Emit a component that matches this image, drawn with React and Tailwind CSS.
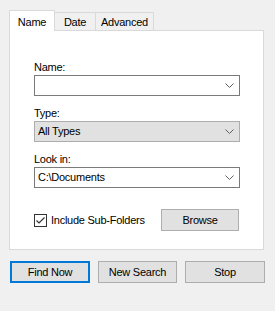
import React from "react";

function Chevron() {
  return (
    <svg width="9" height="5" viewBox="0 0 9 5" className="shrink-0">
      <polyline points="0.5,0.5 4.5,4.5 8.5,0.5" fill="none" stroke="#606060" strokeWidth="1" />
    </svg>
  );
}

function Combo({ value, gray }) {
  return (
    <div
      className={
        "flex h-[21px] w-[206px] items-center justify-between border pl-[3px] pr-[5px] " +
        (gray ? "border-[#adadad] bg-[#e1e1e1]" : "border-[#7a7a7a] bg-white")
      }
    >
      <span className="leading-none">{value}</span>
      <Chevron />
    </div>
  );
}

export default function App() {
  return (
    <div
      className="h-[311px] w-[275px] bg-[#f0f0f0] pl-[9px] pt-[10px] text-[11px] tracking-[-0.25px] text-black"
      style={{ fontFamily: '"Liberation Sans", Arial, sans-serif' }}
    >
      <div className="w-[255px]">
        <div className="flex items-end">
          <div className="relative z-10 mb-[-1px] flex h-[21px] w-[46px] items-start justify-center border border-b-0 border-[#d9d9d9] bg-white pt-[3px]">
            Name
          </div>
          <div className="flex h-[18px] w-[41px] items-center justify-center border border-l-0 border-b-0 border-[#d9d9d9] bg-[#f0f0f0] pt-[1px]">
            Date
          </div>
          <div className="flex h-[18px] w-[58px] items-center justify-center border border-l-0 border-b-0 border-[#d9d9d9] bg-[#f0f0f0] pt-[1px]">
            Advanced
          </div>
        </div>
        <div className="flex h-[220px] flex-col border border-[#d9d9d9] bg-white pl-[24px] pt-[29px]">
          <div className="leading-[14px]">Name:</div>
          <div className="mt-[1px]">
            <Combo value="" />
          </div>
          <div className="mt-[10px] leading-[14px]">Type:</div>
          <div className="mt-[1px]">
            <Combo value="All Types" gray />
          </div>
          <div className="mt-[10px] leading-[14px]">Look in:</div>
          <div className="mt-[1px]">
            <Combo value="C:\Documents" />
          </div>
          <div className="mt-[21px] flex h-[22px] w-[205px] items-center justify-between">
            <div className="flex items-center gap-[4px]">
              <div className="flex h-[13px] w-[13px] items-center justify-center border border-[#333333] bg-white">
                <svg width="11" height="11" viewBox="0 0 11 11">
                  <polyline points="1.5,5.5 4,8 9.5,2.5" fill="none" stroke="#333333" strokeWidth="1.2" />
                </svg>
              </div>
              <span>Include Sub-Folders</span>
            </div>
            <div className="flex h-[22px] w-[78px] items-center justify-center border border-[#adadad] bg-[#e1e1e1]">
              Browse
            </div>
          </div>
        </div>
      </div>
      <div className="mt-[11px] flex gap-[8px] pl-[1px]">
        <div className="flex h-[22px] w-[80px] items-center justify-center border-2 border-[#0078d7] bg-[#e1e1e1]">
          Find Now
        </div>
        <div className="flex h-[22px] w-[79px] items-center justify-center border border-[#adadad] bg-[#e1e1e1]">
          New Search
        </div>
        <div className="flex h-[22px] w-[80px] items-center justify-center border border-[#adadad] bg-[#e1e1e1]">
          Stop
        </div>
      </div>
    </div>
  );
}
